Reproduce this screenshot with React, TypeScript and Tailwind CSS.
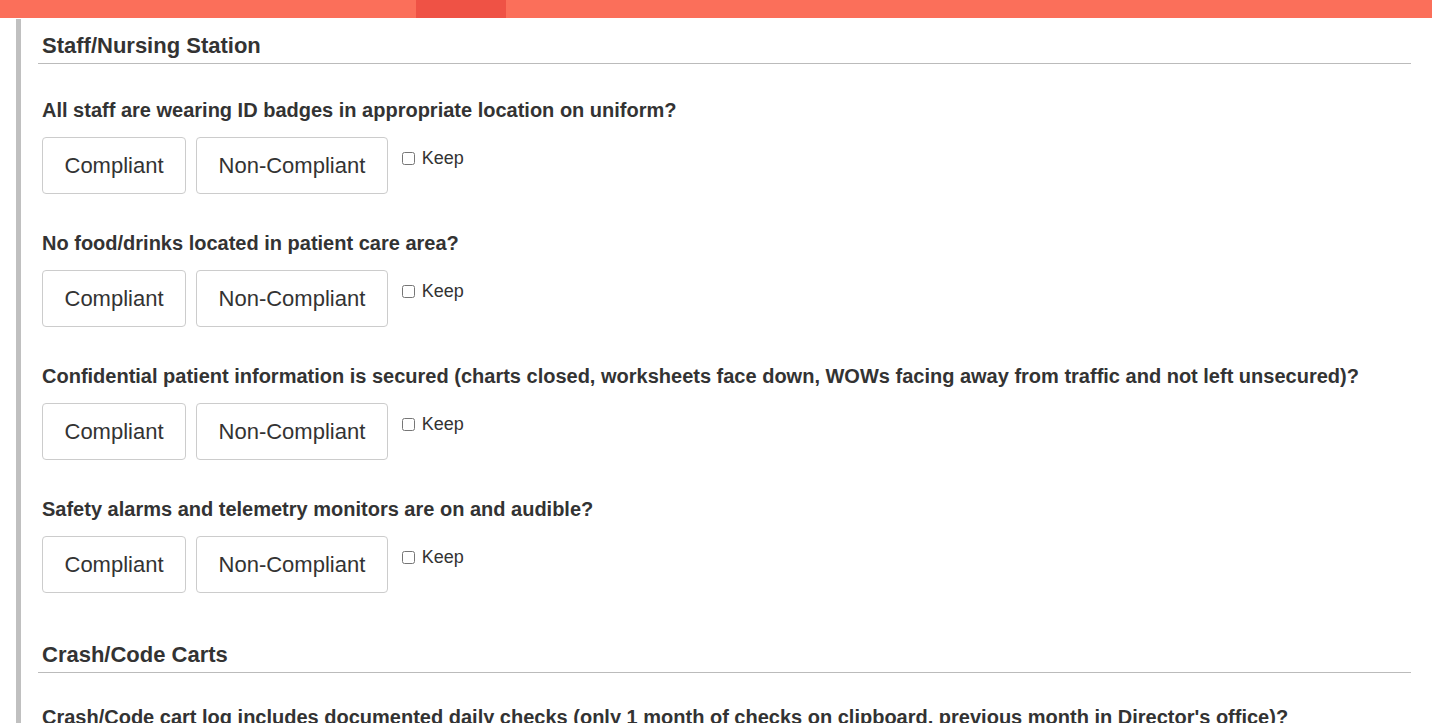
import React from "react";

type Section = { title: string; questions: string[] };

const sections: Section[] = [
  {
    title: "Staff/Nursing Station",
    questions: [
      "All staff are wearing ID badges in appropriate location on uniform?",
      "No food/drinks located in patient care area?",
      "Confidential patient information is secured (charts closed, worksheets face down, WOWs facing away from traffic and not left unsecured)?",
      "Safety alarms and telemetry monitors are on and audible?",
    ],
  },
  {
    title: "Crash/Code Carts",
    questions: [
      "Crash/Code cart log includes documented daily checks (only 1 month of checks on clipboard, previous month in Director's office)?",
    ],
  },
];

function Question({ text }: { text: string }) {
  return (
    <div className="pl-1 pb-[36px]">
      <div className="text-[20px] leading-[26px] font-bold text-[#333]">{text}</div>
      <div className="mt-[14px] flex items-start">
        <button className="px-[21.5px] py-[13px] text-[22px] leading-[29px] text-[#333] bg-white border border-[#ccc] rounded-[4px]">
          Compliant
        </button>
        <button className="ml-[10px] px-[21.5px] py-[13px] text-[22px] leading-[29px] text-[#333] bg-white border border-[#ccc] rounded-[4px]">
          Non-Compliant
        </button>
        <label className="ml-[14px] mt-[9px] flex items-center gap-[7px] text-[18px] leading-[24px] text-[#333]">
          <input type="checkbox" className="m-0 w-[13px] h-[13px]" />
          Keep
        </label>
      </div>
    </div>
  );
}

export default function App() {
  return (
    <div className="min-h-screen bg-white font-['Liberation_Sans',Arial,sans-serif] overflow-hidden">
      <div className="h-[18px] flex bg-[#fb6f5a]">
        <div className="w-[416px]" />
        <div className="w-[90px] bg-[#ef5245]" />
      </div>
      <div className="ml-4 mr-[21px] mt-px border-l-[5px] border-[#c0c0c0] pl-[17px] pt-[14px] h-[720px]">
        {sections.map((s, i) => (
          <div key={s.title} className={i > 0 ? "pt-[13px]" : ""}>
            <h2 className="pl-1 pb-[4px] text-[22px] leading-[26px] font-bold text-[#333] border-b border-[#bbb]">
              {s.title}
            </h2>
            <div className={i > 0 ? "pt-[31px]" : "pt-[33px]"}>
              {s.questions.map((q) => (
                <Question key={q} text={q} />
              ))}
            </div>
          </div>
        ))}
      </div>
    </div>
  );
}
